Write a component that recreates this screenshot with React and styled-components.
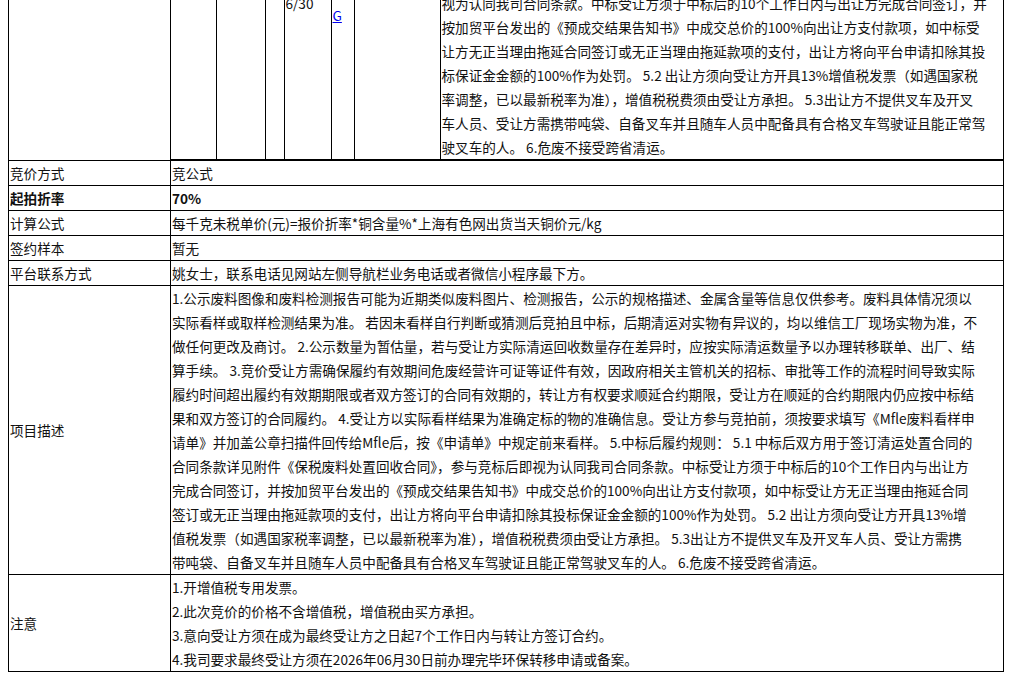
import { useLayoutEffect, useRef } from 'react';
import styled, { createGlobalStyle } from 'styled-components';

const GlobalStyle = createGlobalStyle`
  html, body { margin: 0; padding: 0; height: 100%; overflow: hidden; }
  body {
    font-family: "Noto Sans CJK SC", "Liberation Sans", sans-serif;
    font-size: 13.6px;
    color: #111;
    background: #fff;
  }
`;

const Scroller = styled.div`
  height: 100vh;
  overflow-y: scroll;
  padding: 8px 8px 21px;
  box-sizing: border-box;

  &::-webkit-scrollbar { width: 15px; }
  &::-webkit-scrollbar-track { background: #f1f1f1; }
  &::-webkit-scrollbar-thumb {
    background: #c1c1c1;
    border: 3px solid #f1f1f1;
    border-radius: 8px;
  }
`;

const Title = styled.h2`
  font-size: 18px;
  font-weight: bold;
  margin: 0 0 12px;
`;

const Table = styled.table`
  width: 996px;
  border-collapse: collapse;
  table-layout: fixed;
`;

const Label = styled.td`
  width: 159px;
  border: 1px solid #000;
  padding: 0 1px;
  line-height: 24px;
  vertical-align: middle;
  white-space: nowrap;
  font-weight: ${(p) => (p.$bold ? 'bold' : 'normal')};
`;

const Value = styled.td`
  border: 1px solid #000;
  padding: 0 1px;
  line-height: 24px;
  vertical-align: middle;
  font-weight: ${(p) => (p.$bold ? 'bold' : 'normal')};
`;

const NestCell = styled.td`
  border: 1px solid #000;
  border-bottom-width: 2px;
  padding: 0;
`;

const Inner = styled.table`
  width: 100%;
  border-collapse: collapse;
  table-layout: fixed;
`;

const InnerCell = styled.td`
  border-left: ${(p) => (p.$first ? 'none' : '1px solid #000')};
  padding: 0 1px;
  line-height: 24px;
  vertical-align: middle;
  word-break: break-all;
`;

const InnerHead = styled(InnerCell)`
  border-bottom: 1px solid #000;
  font-weight: bold;
  text-align: center;
`;

const Line = styled.div`
  white-space: nowrap;
  line-height: 24px;
`;

const Anchor = styled.a`
  color: #0000ee;
  text-decoration: underline;
`;

const topLines = [
  '1.公示废料图像和废料检测报告可能为近期类似废料图片、检测报告，公',
  '示的规格描述、金属含量等信息仅供参考。废料具体情况须以实际看样或取',
  '样检测结果为准。 若因未看样自行判断或猜测后竞拍且中标，后期清运对',
  '实物有异议的，均以维信工厂现场实物为准，不做任何更改及商讨。 2.公示',
  '数量为暂估量，若与受让方实际清运回收数量存在差异时，应按实际清运数',
  '量予以办理转移联单、出厂、结算手续。 5.1 中标后双方用于签订清运处',
  '置合同的合同条款详见附件《保税废料处置回收合同》，参与竞标后即',
  '视为认同我司合同条款。中标受让方须于中标后的10个工作日内与出让方完成合同签订，并',
  '按加贸平台发出的《预成交结果告知书》中成交总价的100%向出让方支付款项，如中标受',
  '让方无正当理由拖延合同签订或无正当理由拖延款项的支付，出让方将向平台申请扣除其投',
  '标保证金金额的100%作为处罚。 5.2 出让方须向受让方开具13%增值税发票（如遇国家税',
  '率调整，已以最新税率为准），增值税税费须由受让方承担。 5.3出让方不提供叉车及开叉',
  '车人员、受让方需携带吨袋、自备叉车并且随车人员中配备具有合格叉车驾驶证且能正常驾',
  '驶叉车的人。 6.危废不接受跨省清运。',
];

const descLines = [
  '1.公示废料图像和废料检测报告可能为近期类似废料图片、检测报告，公示的规格描述、金属含量等信息仅供参考。废料具体情况须以',
  '实际看样或取样检测结果为准。 若因未看样自行判断或猜测后竞拍且中标，后期清运对实物有异议的，均以维信工厂现场实物为准，不',
  '做任何更改及商讨。 2.公示数量为暂估量，若与受让方实际清运回收数量存在差异时，应按实际清运数量予以办理转移联单、出厂、结',
  '算手续。 3.竞价受让方需确保履约有效期间危废经营许可证等证件有效，因政府相关主管机关的招标、审批等工作的流程时间导致实际',
  '履约时间超出履约有效期期限或者双方签订的合同有效期的，转让方有权要求顺延合约期限，受让方在顺延的合约期限内仍应按中标结',
  '果和双方签订的合同履约。 4.受让方以实际看样结果为准确定标的物的准确信息。受让方参与竞拍前，须按要求填写《Mfle废料看样申',
  '请单》并加盖公章扫描件回传给Mfle后，按《申请单》中规定前来看样。 5.中标后履约规则： 5.1 中标后双方用于签订清运处置合同的',
  '合同条款详见附件《保税废料处置回收合同》，参与竞标后即视为认同我司合同条款。中标受让方须于中标后的10个工作日内与出让方',
  '完成合同签订，并按加贸平台发出的《预成交结果告知书》中成交总价的100%向出让方支付款项，如中标受让方无正当理由拖延合同',
  '签订或无正当理由拖延款项的支付，出让方将向平台申请扣除其投标保证金金额的100%作为处罚。 5.2 出让方须向受让方开具13%增',
  '值税发票（如遇国家税率调整，已以最新税率为准），增值税税费须由受让方承担。 5.3出让方不提供叉车及开叉车人员、受让方需携',
  '带吨袋、自备叉车并且随车人员中配备具有合格叉车驾驶证且能正常驾驶叉车的人。 6.危废不接受跨省清运。',
];

const notes = [
  '1.开增值税专用发票。',
  '2.此次竞价的价格不含增值税，增值税由买方承担。',
  '3.意向受让方须在成为最终受让方之日起7个工作日内与转让方签订合约。',
  '4.我司要求最终受让方须在2026年06月30日前办理完毕环保转移申请或备案。',
];

const simpleRows = [
  ['竞价方式', '竞公式'],
  ['起拍折率', '70%', true],
  ['计算公式', '每千克未税单价(元)=报价折率*铜含量%*上海有色网出货当天铜价元/kg'],
  ['签约样本', '暂无'],
  ['平台联系方式', '姚女士，联系电话见网站左侧导航栏业务电话或者微信小程序最下方。'],
];

const headRows = [
  ['项目编号', 'JY2026-0613'],
  ['项目名称', '废铜料及含铜废料处置'],
  ['转让方', '维信电子（苏州）有限公司'],
  ['所在地区', '江苏省苏州市'],
  ['竞价开始时间', '2026-06-18 10:00:00'],
  ['竞价结束时间', '2026-06-18 10:30:00'],
  ['保证金', '20000元'],
  ['看样时间', '2026-06-15 至 2026-06-17'],
  ['看样地址', '江苏省苏州市工业园区'],
  ['联系人', '姚女士'],
];

export default function App() {
  const ref = useRef(null);
  useLayoutEffect(() => {
    if (ref.current) ref.current.scrollTop = ref.current.scrollHeight;
  }, []);

  return (
    <>
      <GlobalStyle />
      <Scroller ref={ref}>
        <Title>竞价公告详情</Title>
        <Table>
          <tbody>
            {headRows.map(([k, v]) => (
              <tr key={k}>
                <Label>{k}</Label>
                <Value>{v}</Value>
              </tr>
            ))}
            <tr>
              <Label>标的清单</Label>
              <NestCell>
                <Inner>
                  <colgroup>
                    <col style={{ width: 45 }} />
                    <col style={{ width: 49 }} />
                    <col style={{ width: 19 }} />
                    <col style={{ width: 47 }} />
                    <col style={{ width: 23 }} />
                    <col style={{ width: 86 }} />
                    <col />
                  </colgroup>
                  <tbody>
                    <tr>
                      <InnerHead $first>序号</InnerHead>
                      <InnerHead>名称</InnerHead>
                      <InnerHead>否</InnerHead>
                      <InnerHead>期限</InnerHead>
                      <InnerHead>附</InnerHead>
                      <InnerHead>备注</InnerHead>
                      <InnerHead>说明</InnerHead>
                    </tr>
                    <tr>
                      <InnerCell $first />
                      <InnerCell />
                      <InnerCell>否</InnerCell>
                      <InnerCell>2026/06/30</InnerCell>
                      <InnerCell>
                        <Anchor href="#">PDF</Anchor>
                        <br />
                        <Anchor href="#">G</Anchor>
                      </InnerCell>
                      <InnerCell />
                      <InnerCell>
                        {topLines.map((l, i) => (
                          <Line key={i}>{l}</Line>
                        ))}
                      </InnerCell>
                    </tr>
                  </tbody>
                </Inner>
              </NestCell>
            </tr>
            {simpleRows.map(([k, v, b]) => (
              <tr key={k}>
                <Label $bold={b}>{k}</Label>
                <Value $bold={b}>{v}</Value>
              </tr>
            ))}
            <tr>
              <Label>项目描述</Label>
              <Value>
                {descLines.map((l, i) => (
                  <Line key={i}>{l}</Line>
                ))}
              </Value>
            </tr>
            <tr>
              <Label>注意</Label>
              <Value>
                {notes.map((l, i) => (
                  <Line key={i}>{l}</Line>
                ))}
              </Value>
            </tr>
          </tbody>
        </Table>
      </Scroller>
    </>
  );
}
